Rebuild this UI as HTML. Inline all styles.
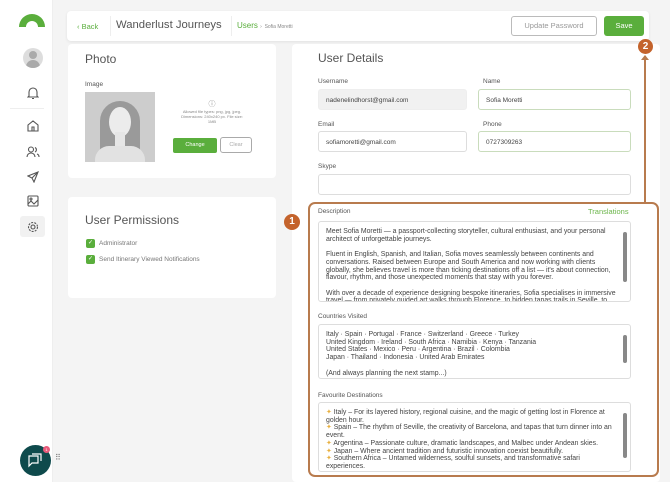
<!DOCTYPE html>
<html><head><meta charset="utf-8"><style>
*{box-sizing:border-box;margin:0;padding:0}
body{width:670px;height:482px;overflow:hidden;background:#f4f4f4;font-family:"Liberation Sans",sans-serif;color:#555;position:relative}
.abs{position:absolute}
.side{left:0;top:0;width:53px;height:482px;background:#fff;border-right:1px solid #eee}
.card{background:#fff;border-radius:4px}
.lbl{font-size:6.5px;color:#555}
.inp{height:21px;border:1px solid #ddd;border-radius:3px;font-size:6.5px;padding:7px 7px;color:#444;background:#fff}
.ta{border:1px solid #ddd;border-radius:3px;font-size:6.9px;line-height:7.7px;padding:6px 7px;color:#444;background:#fff;overflow:hidden}
.sb{position:absolute;right:3px;width:4px;background:#888;border-radius:2px}
.chk{display:inline-block;width:9px;height:9px;background:#5aae3c;border-radius:2px;color:#fff;font-size:6px;text-align:center;line-height:9px;vertical-align:middle;margin-right:4px}
</style></head><body>
<div class="abs side">
<svg class="abs" style="left:17px;top:12px" width="30" height="16"><path d="M2 15 A13 13 0 0 1 28 15 L21 15 A6 6 0 0 0 9 15Z" fill="#5aae3c"/></svg>
<div class="abs" style="left:23px;top:48px;width:20px;height:20px;border-radius:50%;background:#ddd;overflow:hidden"><div class="abs" style="left:6px;top:3px;width:8px;height:8px;border-radius:50%;background:#aaa"></div><div class="abs" style="left:3px;top:12px;width:14px;height:10px;border-radius:7px 7px 0 0;background:#aaa"></div></div>
<svg class="abs" style="left:27px;top:86px" width="12" height="14" fill="none" stroke="#555" stroke-width="1.1"><path d="M2 10 V6 a4 4 0 0 1 8 0 V10 L11 11 H1Z M5 12.5 h2"/></svg>
<div class="abs" style="left:10px;top:108px;width:34px;border-top:1px solid #eee"></div>
<svg class="abs" style="left:27px;top:120px" width="12" height="12" fill="none" stroke="#555" stroke-width="1.1"><path d="M1 5 L6 1 L11 5 V11 H1Z M5 11 V7 H7 V11"/></svg>
<svg class="abs" style="left:26px;top:146px" width="14" height="12" fill="none" stroke="#555" stroke-width="1.1"><circle cx="5" cy="3.5" r="2.5"/><path d="M1 11 a4 4 0 0 1 8 0 M9 1.5 a2.5 2.5 0 0 1 0 4.5 M11 8 a3 3 0 0 1 2 3"/></svg>
<svg class="abs" style="left:27px;top:171px" width="12" height="12" fill="none" stroke="#555" stroke-width="1.1"><path d="M11 1 L1 5 L5 7 L7 11Z M5 7 L11 1"/></svg>
<svg class="abs" style="left:27px;top:195px" width="12" height="12" fill="none" stroke="#555" stroke-width="1.1"><rect x="1" y="1" width="10" height="10" rx="1"/><path d="M1 9 L4 6 L7 9 L11 5"/><circle cx="4" cy="4" r="1"/></svg>
<div class="abs" style="left:20px;top:216px;width:25px;height:21px;background:#f1f1f1;border-radius:3px"></div>
<svg class="abs" style="left:27px;top:221px" width="12" height="12" fill="none" stroke="#555" stroke-width="1.1"><circle cx="6" cy="6" r="2"/><circle cx="6" cy="6" r="4.5" stroke-dasharray="2 1.2"/></svg>
<div class="abs" style="left:20px;top:445px;width:31px;height:31px;border-radius:50%;background:#0e4a4c"></div>
<svg class="abs" style="left:27px;top:452px" width="16" height="16" fill="none" stroke="#fff" stroke-width="1.2"><path d="M2 4 h9 v7 h-6 l-3 3Z M5 2 h9 v7"/></svg>
<div class="abs" style="left:43px;top:446px;width:7px;height:7px;border-radius:50%;background:#e85a7a;font-size:4px;color:#fff;text-align:center;line-height:7px">1</div>
</div>
<div class="abs" style="left:55px;top:456px;font-size:8px;color:#777;line-height:4px">⠿</div>
<!-- header -->
<div class="abs card" style="left:67px;top:11px;width:582px;height:30px;box-shadow:0 1px 3px rgba(0,0,0,.08)">
<div class="abs" style="left:10px;top:11px;font-size:7.5px;color:#5aae3c">‹ Back</div>
<div class="abs" style="left:43px;top:5px;height:20px;border-left:1px solid #eee"></div>
<div class="abs" style="left:49px;top:8px;font-size:11.3px;color:#555">Wanderlust Journeys</div>
<div class="abs" style="left:164px;top:5px;height:20px;border-left:1px solid #eee"></div>
<div class="abs" style="left:170px;top:10px;font-size:8px;color:#5aae3c">Users <span style="color:#888;font-size:5px">›&nbsp; Sofia Moretti</span></div>
<div class="abs" style="left:444px;top:5px;width:86px;height:20px;border:1px solid #bbb;border-radius:3px;font-size:7.5px;color:#999;text-align:center;line-height:18px">Update Password</div>
<div class="abs" style="left:537px;top:5px;width:40px;height:20px;background:#5aae3c;border-radius:3px;font-size:7.5px;color:#fff;text-align:center;line-height:20px">Save</div>
</div>
<!-- photo -->
<div class="abs card" style="left:68px;top:44px;width:208px;height:134px">
<div class="abs" style="left:17px;top:8px;font-size:12px;color:#555">Photo</div>
<div class="abs lbl" style="left:17px;top:37px">Image</div>
<div class="abs" style="left:17px;top:48px;width:70px;height:70px;background:#cdcdcd;overflow:hidden">
<div class="abs" style="left:15px;top:9px;width:40px;height:58px;border-radius:20px 20px 8px 8px;background:#9a9a9a"></div>
<div class="abs" style="left:24px;top:15px;width:22px;height:30px;border-radius:50%;background:#ececec"></div>
<div class="abs" style="left:30px;top:40px;width:10px;height:14px;background:#e6e6e6"></div>
<div class="abs" style="left:10px;top:54px;width:50px;height:20px;border-radius:14px 14px 0 0;background:#e2e2e2"></div>
</div>
<div class="abs" style="left:100px;top:56px;width:88px;text-align:center;font-size:4px;line-height:5px;color:#888"><div style="font-size:7px;line-height:9px">ⓘ</div>Allowed file types: png, jpg, jpeg.<br>Dimensions: 240x240 px. File size:<br>1MB</div>
<div class="abs" style="left:105px;top:94px;width:44px;height:15px;background:#5aae3c;border-radius:2px;color:#fff;font-size:5.5px;text-align:center;line-height:15px">Change</div>
<div class="abs" style="left:152px;top:93px;width:32px;height:16px;border:1px solid #aaa;border-radius:3px;color:#aaa;font-size:5.5px;text-align:center;line-height:14px">Clear</div>
</div>
<!-- permissions -->
<div class="abs card" style="left:68px;top:197px;width:208px;height:101px">
<div class="abs" style="left:17px;top:16px;font-size:12px;color:#555">User Permissions</div>
<div class="abs" style="left:18px;top:42px;font-size:6.5px;color:#777"><span class="chk">✓</span>Administrator</div>
<div class="abs" style="left:18px;top:58px;font-size:6.5px;color:#777"><span class="chk">✓</span>Send Itinerary Viewed Notifications</div>
</div>
<!-- user details -->
<div class="abs card" style="left:292px;top:44px;width:368px;height:438px"></div>
<div class="abs" style="left:318px;top:51px;font-size:12px;color:#555">User Details</div>
<div class="abs lbl" style="left:318px;top:78px">Username</div>
<div class="abs lbl" style="left:483px;top:78px">Name</div>
<div class="abs inp" style="left:318px;top:89px;width:149px;background:#f1f1f1;border-color:#eee">nadenelindhorst@gmail.com</div>
<div class="abs inp" style="left:478px;top:89px;width:153px;border-color:#c9dcbc">Sofia Moretti</div>
<div class="abs lbl" style="left:318px;top:121px">Email</div>
<div class="abs lbl" style="left:483px;top:121px">Phone</div>
<div class="abs inp" style="left:318px;top:131px;width:149px">sofiamoretti@gmail.com</div>
<div class="abs inp" style="left:478px;top:131px;width:153px;border-color:#c9dcbc">0727309263</div>
<div class="abs lbl" style="left:318px;top:163px">Skype</div>
<div class="abs inp" style="left:318px;top:174px;width:313px"></div>
<div class="abs" style="left:308px;top:202px;width:351px;height:275px;border:2px solid #b87b4e;border-radius:7px"></div>
<div class="abs" style="left:644px;top:56px;width:2px;height:148px;background:#b87b4e"></div>
<div class="abs" style="left:641px;top:55px;width:0;height:0;border-left:4px solid transparent;border-right:4px solid transparent;border-bottom:5px solid #b87b4e"></div>
<div class="abs" style="left:638px;top:39px;width:15px;height:15px;border-radius:50%;background:#c4632c;color:#fff;font-size:10px;font-weight:bold;text-align:center;line-height:15px">2</div>
<div class="abs" style="left:284px;top:214px;width:16px;height:16px;border-radius:50%;background:#c4632c;color:#fff;font-size:10px;font-weight:bold;text-align:center;line-height:16px">1</div>
<div class="abs lbl" style="left:318px;top:208px">Description</div>
<div class="abs" style="left:588px;top:207px;font-size:7.5px;color:#6bb54a">Translations</div>
<div class="abs ta" style="left:318px;top:221px;width:313px;height:81px;padding-right:14px">Meet Sofia Moretti — a passport-collecting storyteller, cultural enthusiast, and your personal architect of unforgettable journeys.<br><br>Fluent in English, Spanish, and Italian, Sofia moves seamlessly between continents and conversations. Raised between Europe and South America and now working with clients globally, she believes travel is more than ticking destinations off a list — it's about connection, flavour, rhythm, and those unexpected moments that stay with you forever.<br><br>With over a decade of experience designing bespoke itineraries, Sofia specialises in immersive travel — from privately guided art walks through Florence, to hidden tapas trails in Seville, to<div class="sb" style="top:10px;height:50px"></div></div>
<div class="abs lbl" style="left:318px;top:313px">Countries Visited</div>
<div class="abs ta" style="left:318px;top:324px;width:313px;height:55px">Italy · Spain · Portugal · France · Switzerland · Greece · Turkey<br>United Kingdom · Ireland · South Africa · Namibia · Kenya · Tanzania<br>United States · Mexico · Peru · Argentina · Brazil · Colombia<br>Japan · Thailand · Indonesia · United Arab Emirates<br><br>(And always planning the next stamp...)<div class="sb" style="top:10px;height:28px"></div></div>
<div class="abs lbl" style="left:318px;top:392px">Favourite Destinations</div>
<div class="abs ta" style="left:318px;top:402px;width:313px;height:70px;padding-right:14px"><span style="color:#e8b040">✦</span> Italy – For its layered history, regional cuisine, and the magic of getting lost in Florence at golden hour.<br><span style="color:#e8b040">✦</span> Spain – The rhythm of Seville, the creativity of Barcelona, and tapas that turn dinner into an event.<br><span style="color:#e8b040">✦</span> Argentina – Passionate culture, dramatic landscapes, and Malbec under Andean skies.<br><span style="color:#e8b040">✦</span> Japan – Where ancient tradition and futuristic innovation coexist beautifully.<br><span style="color:#e8b040">✦</span> Southern Africa – Untamed wilderness, soulful sunsets, and transformative safari experiences.<div class="sb" style="top:10px;height:45px"></div></div>
</body></html>
